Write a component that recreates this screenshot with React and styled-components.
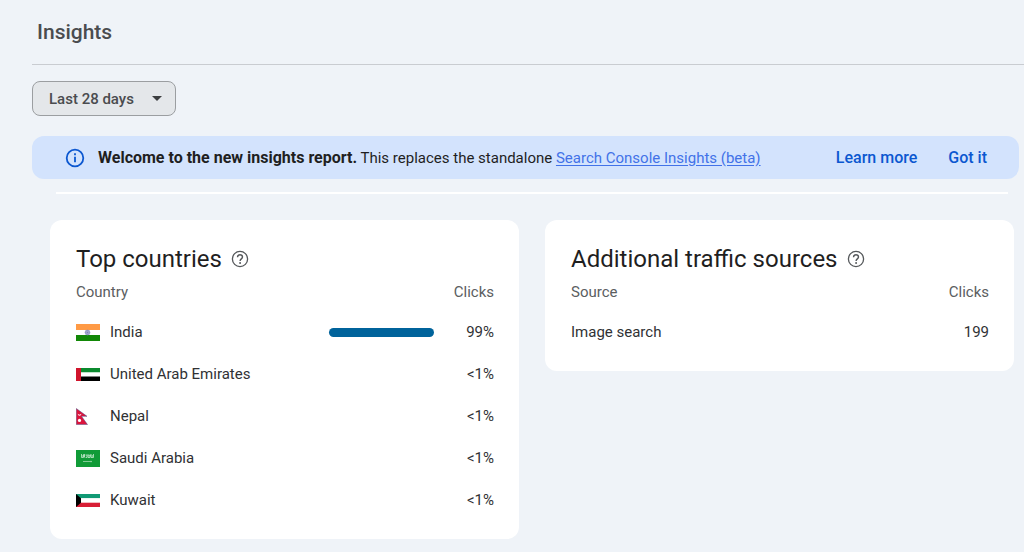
import React from 'react';
import styled, { createGlobalStyle } from 'styled-components';

const FONT = `Roboto, 'Liberation Sans', sans-serif`;

const COLORS = {
  page: '#eff3f8',
  banner: '#d3e3fd',
  blue: '#0b57d0',
  text: '#303134',
  muted: '#5b5e61',
  bar: '#00639b',
};

const GlobalStyle = createGlobalStyle`
  * {
    box-sizing: border-box;
  }

  body {
    margin: 0;
    background: ${COLORS.page};
    color: ${COLORS.text};
    font-family: ${FONT};
    font-size: 15px;
    line-height: 20px;
  }
`;

const Page = styled.main`
  padding-left: 32px;
`;

const Header = styled.header`
  height: 65px;
  padding-left: 5px;
  display: flex;
  align-items: center;
  border-bottom: 1px solid #c9ccd1;
`;

const PageTitle = styled.h1`
  margin: 0;
  font-size: 21px;
  line-height: 28px;
  font-weight: 500;
  color: #4a4c4f;
`;

const Content = styled.div`
  padding: 16px 5px 12px 0;
`;

const SelectWrap = styled.div`
  width: 144px;
  display: grid;
  align-items: center;

  & > * {
    grid-area: 1 / 1;
  }

  svg {
    justify-self: end;
    margin-right: 14px;
    pointer-events: none;
  }
`;

const Select = styled.select`
  appearance: none;
  width: 100%;
  height: 35px;
  padding: 0 32px 0 16px;
  border: 1px solid #9b9ea1;
  border-radius: 8px;
  background: #e4e7ea;
  color: #4a4c4f;
  font-family: inherit;
  font-size: 15px;
  font-weight: 500;
`;

const Banner = styled.section`
  margin-top: 20px;
  min-height: 43px;
  padding: 0 32px 0 33px;
  display: flex;
  align-items: center;
  border-radius: 12px;
  background: ${COLORS.banner};
`;

const BannerText = styled.p`
  flex: 1;
  margin: 0 0 0 13px;
  color: #1f1f1f;

  b {
    font-size: 16px;
  }
`;

const BannerLink = styled.a`
  color: #4272e8;
  text-decoration: underline;
  text-underline-offset: 2px;
`;

const BannerActions = styled.div`
  display: flex;
  gap: 31px;
`;

const TextButton = styled.button`
  padding: 0;
  border: 0;
  background: none;
  color: ${COLORS.blue};
  font-family: inherit;
  font-size: 16px;
  line-height: 20px;
  font-weight: 500;
  cursor: pointer;
`;

const Divider = styled.hr`
  height: 2px;
  margin: 13px 11px 26px 24px;
  border: 0;
  background: #fff;
`;

const Cards = styled.div`
  margin: 0 5px 0 18px;
  display: grid;
  grid-template-columns: 1fr 1fr;
  gap: 26px;
  align-items: start;
`;

const Card = styled.section`
  padding: 23px 25px 18px 26px;
  border-radius: 12px;
  background: #fff;
`;

const CardHeader = styled.div`
  display: flex;
  align-items: center;
  gap: 9px;
  height: 32px;
`;

const CardTitle = styled.h2`
  margin: 0;
  font-size: 24px;
  line-height: 32px;
  font-weight: 400;
  color: #1f1f1f;
`;

const HelpButton = styled.button`
  display: flex;
  padding: 0;
  border: 0;
  background: none;
  color: #55585b;
  cursor: pointer;
`;

const Table = styled.table`
  width: 100%;
  border-collapse: collapse;
`;

const HeadCell = styled.th`
  height: 36px;
  padding: 0 0 2px;
  font-weight: 400;
  color: ${COLORS.muted};
  text-align: ${({ $end }) => ($end ? 'right' : 'left')};
`;

const Cell = styled.td`
  height: 42px;
  padding: 0;
  width: ${({ $width }) => $width || 'auto'};
  text-align: ${({ $end }) => ($end ? 'right' : 'left')};
`;

const Label = styled.div`
  display: flex;
  align-items: center;
  gap: 10px;
`;

const Bar = styled.div`
  height: 9px;
  border-radius: 5px;
  background: ${COLORS.bar};
`;

const FlagSvg = styled.svg`
  width: 24px;
  height: 17px;
  flex: none;
`;

const FLAGS = {
  in: (
    <>
      <path fill="#ff9a45" d="M0 0h24v6H0z" />
      <path fill="#fff" d="M0 6h24v5H0z" />
      <path fill="#128807" d="M0 11h24v6H0z" />
      <circle cx="11.5" cy="8.5" r="2.4" fill="#c3c6e2" stroke="#8288bd" strokeWidth=".7" />
      <path stroke="#7a80b5" strokeWidth=".5" d="M11.5 6v5M9 8.500h5M9.800 6.800l3.400 3.400M13.200 6.800l-3.400 3.400" />
    </>
  ),
  ae: (
    <>
      <path fill="#0b8a2e" d="M0 2h24v4.500H0z" />
      <path fill="#fff" d="M0 6.500h24v4H0z" />
      <path fill="#000" d="M0 10.500h24V15H0z" />
      <path fill="#d0142c" d="M0 2h5v13H0z" />
    </>
  ),
  np: (
    <>
      <path fill="#dc143c" stroke="#4a4f86" strokeWidth=".5" d="M.3.500 11 8.300H5.500l6 8.300H.3z" />
      <path fill="#fff" d="M1.800 5.600c.4 1.500 3 1.500 3.500 0 .2 3-3.700 3-3.500 0z" />
      <circle cx="3.500" cy="12.400" r="1.600" fill="#fff" />
    </>
  ),
  sa: (
    <>
      <path fill="#109b37" d="M0 0h24v17H0z" />
      <path
        fill="none"
        stroke="#c4e8cd"
        strokeWidth=".8"
        d="M5.500 4v3.500h2V4.200M8.500 7.500V4M9.500 5h1.500v2.500H9.600M12 4v3.500h2V4.500M15 4v3.500h2.500V4M16.200 5v2M6 6h3M12 5.800h3"
      />
      <path fill="none" stroke="#8fd1a0" strokeWidth=".9" d="M7 11.500h9M15 10.800v1.500" />
    </>
  ),
  kw: (
    <>
      <path fill="#119a75" d="M0 2h24v4.300H0z" />
      <path fill="#fff" d="M0 6.300h24v4.400H0z" />
      <path fill="#d81e35" d="M0 10.700h24V15H0z" />
      <path fill="#000" d="M0 2l5 4.300v4.400L0 15z" />
    </>
  ),
};

const Flag = ({ code }) => (
  <FlagSvg viewBox="0 0 24 17" aria-hidden="true">
    {FLAGS[code]}
  </FlagSvg>
);

const InfoIcon = () => (
  <svg width="20" height="20" viewBox="0 0 20 20" aria-hidden="true">
    <circle cx="10" cy="10" r="8.300" fill="none" stroke={COLORS.blue} strokeWidth="1.800" />
    <path fill={COLORS.blue} d="M9.100 5.300h1.800v1.900H9.100zM9.100 8.800h1.800v5.500H9.100z" />
  </svg>
);

const HelpIcon = () => (
  <svg width="18" height="18" viewBox="0 0 18 18" aria-hidden="true">
    <circle cx="9" cy="9" r="7.600" fill="none" stroke="currentColor" strokeWidth="1.300" />
    <path
      fill="none"
      stroke="currentColor"
      strokeWidth="1.400"
      d="M6.500 7.200C6.600 5.600 7.600 4.800 9 4.800s2.500.9 2.500 2.200C11.500 8.800 9.100 9 9.100 11"
    />
    <circle cx="9.100" cy="13" r=".95" fill="currentColor" />
  </svg>
);

const countries = [
  { code: 'in', name: 'India', clicks: '99%', share: 99 },
  { code: 'ae', name: 'United Arab Emirates', clicks: '<1%' },
  { code: 'np', name: 'Nepal', clicks: '<1%' },
  { code: 'sa', name: 'Saudi Arabia', clicks: '<1%' },
  { code: 'kw', name: 'Kuwait', clicks: '<1%' },
];

const sources = [{ name: 'Image search', clicks: '199' }];

const CardHeading = ({ title }) => (
  <CardHeader>
    <CardTitle>{title}</CardTitle>
    <HelpButton type="button" aria-label={`About ${title}`}>
      <HelpIcon />
    </HelpButton>
  </CardHeader>
);

const App = () => (
  <>
    <GlobalStyle />
    <Page>
      <Header>
        <PageTitle>Insights</PageTitle>
      </Header>
      <Content>
        <SelectWrap>
          <Select aria-label="Date range" defaultValue="28">
            <option value="28">Last 28 days</option>
          </Select>
          <svg width="10" height="5" viewBox="0 0 10 5" aria-hidden="true">
            <path fill="#3c3e40" d="M0 0h10L5 5z" />
          </svg>
        </SelectWrap>

        <Banner>
          <InfoIcon />
          <BannerText>
            <b>Welcome to the new insights report.</b> This replaces the
            standalone{' '}
            <BannerLink href="#insights">
              Search Console Insights (beta)
            </BannerLink>
          </BannerText>
          <BannerActions>
            <TextButton type="button">Learn more</TextButton>
            <TextButton type="button">Got it</TextButton>
          </BannerActions>
        </Banner>

        <Divider />

        <Cards>
          <Card>
            <CardHeading title="Top countries" />
            <Table>
              <thead>
                <tr>
                  <HeadCell scope="col">Country</HeadCell>
                  <HeadCell scope="col" colSpan={2} $end>
                    Clicks
                  </HeadCell>
                </tr>
              </thead>
              <tbody>
                {countries.map(({ code, name, clicks, share }) => (
                  <tr key={code}>
                    <Cell>
                      <Label>
                        <Flag code={code} />
                        {name}
                      </Label>
                    </Cell>
                    <Cell $width="106px">
                      {share && <Bar style={{ width: `${share}%` }} />}
                    </Cell>
                    <Cell $width="59px" $end>
                      {clicks}
                    </Cell>
                  </tr>
                ))}
              </tbody>
            </Table>
          </Card>

          <Card>
            <CardHeading title="Additional traffic sources" />
            <Table>
              <thead>
                <tr>
                  <HeadCell scope="col">Source</HeadCell>
                  <HeadCell scope="col" $end>
                    Clicks
                  </HeadCell>
                </tr>
              </thead>
              <tbody>
                {sources.map(({ name, clicks }) => (
                  <tr key={name}>
                    <Cell>{name}</Cell>
                    <Cell $end>{clicks}</Cell>
                  </tr>
                ))}
              </tbody>
            </Table>
          </Card>
        </Cards>
      </Content>
    </Page>
  </>
);

export default App;
